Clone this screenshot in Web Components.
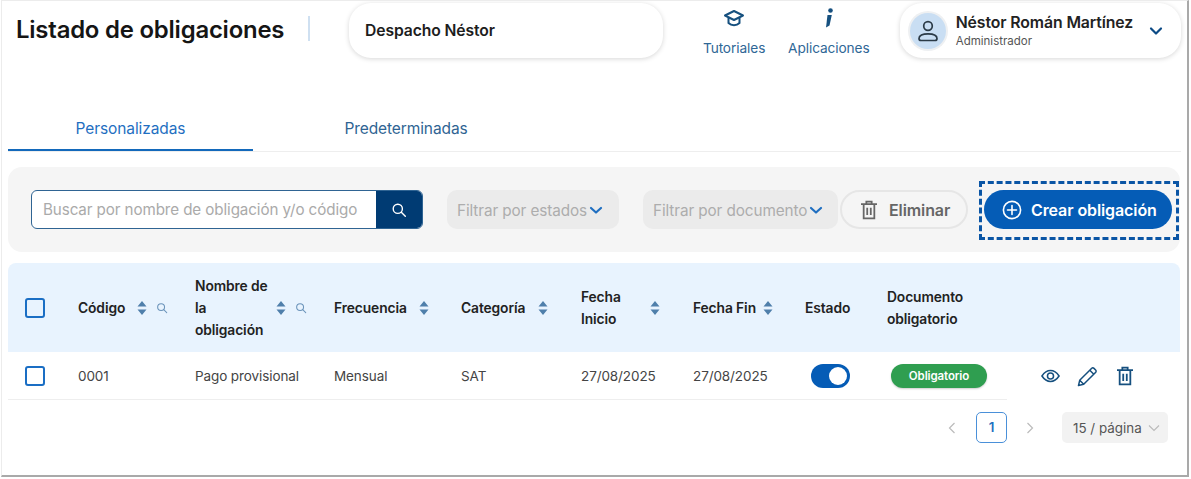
<!DOCTYPE html>
<html lang="es">
<head>
<meta charset="utf-8">
<title>Listado de obligaciones</title>
<style>
    html, body { margin: 0; background: #fff; }
    body { font-family: Inter, "Noto Sans", sans-serif; color: #222; }
</style>
</head>
<body>
<app-frame>
    <app-header></app-header>
    <tab-bar></tab-bar>
    <tool-bar></tool-bar>
    <obligations-table></obligations-table>
    <table-pager></table-pager>
</app-frame>
<script>
const ICONS = {
    search: `<svg viewBox="0 0 16 16" fill="none" stroke="currentColor" stroke-width="1.4" stroke-linecap="round"><circle cx="6.8" cy="6.8" r="4.6"/><path d="M10.3 10.3l4 4"/></svg>`,
    trash: `<svg width="16" height="20" viewBox="0 0 18 22" fill="none" stroke="currentColor" stroke-width="2"><path d="M0 4.500h18M6 4V1.500h6V4M3 4.500V20.500h12V4.500M7 8.500v8M11 8.500v8"/></svg>`
};

class AppFrame extends HTMLElement {
    constructor() {
        super();
        this.attachShadow({mode: "open"}).innerHTML = `
        <style>
            :host {
                display: block;
                box-sizing: border-box;
                width: 1188px;
                height: 477px;
                margin: 0 0 0 1px;
                padding: 0 6px;
                border-style: solid;
                border-color: #ececec #a9a9a9 #a9a9a9 #ececec;
                border-width: 1px 2px 2px 1px;
                overflow: hidden;
            }
        </style>
        <slot></slot>`;
    }
}

class AppHeader extends HTMLElement {
    constructor() {
        super();
        this.attachShadow({mode: "open"}).innerHTML = `
        <style>
            :host { display: flex; align-items: flex-start; height: 107px; }
            h1 { margin: 14px 0 0 8px; width: 268px; font-size: 23.9px; line-height: 30px; font-weight: 600; color: #151515; letter-spacing: -.2px; white-space: nowrap; }
            .sep { width: 2px; height: 25px; margin: 15px 39px 0 24px; background: #cfe0f1; }
            .pill { box-sizing: border-box; height: 55px; margin-top: 2px; background: #fff; border-radius: 22px; box-shadow: 0 1px 5px rgba(0,0,0,.16); }
            .company { width: 315px; display: flex; align-items: center; padding-left: 16px; font-size: 15.7px; font-weight: 600; color: #1d1d1d; letter-spacing: -.1px; }
            .link { display: flex; flex-direction: column; align-items: center; margin-top: 2px; font-size: 13.7px; color: #2f6796; letter-spacing: -.1px; }
            .link svg { display: block; height: 22px; margin: 4px 0 11px; }
            .tut { width: 80px; margin-left: 31px; }
            .app { width: 100px; margin-left: 5px; }
            .user { width: 282px; margin-left: 21px; display: flex; align-items: center; padding-left: 10px; }
            .avatar { width: 36px; height: 36px; border-radius: 50%; background: #c9def3; box-shadow: 0 0 0 2px #eef0f2; display: flex; align-items: center; justify-content: center; flex: none; }
            .who { margin-left: 10px; flex: 1; }
            .name { font-size: 15.8px; line-height: 21px; font-weight: 600; color: #222; white-space: nowrap; letter-spacing: -.1px; }
            .role { font-size: 11.500px; line-height: 16px; color: #555; }
            .chev { margin-right: 18px; flex: none; }
        </style>
        <h1>Listado de obligaciones</h1>
        <div class="sep"></div>
        <div class="pill company">Despacho Néstor</div>
        <div class="link tut">
            <svg viewBox="0 0 22 20" width="22" fill="none" stroke="#16507f" stroke-width="2" stroke-linejoin="round"><path d="M11 3L2 7.500l9 4.500 9-4.500z"/><path d="M5.500 10v5c1.500 1.500 3.500 2.200 5.500 2.200s4-.7 5.500-2.200v-5"/></svg>
            Tutoriales
        </div>
        <div class="link app">
            <svg viewBox="0 0 12 22" width="12" fill="#16507f"><circle cx="7.500" cy="3.500" r="2.300"/><path d="M4.500 8h4.300L6.500 18.500 3 20.500z"/></svg>
            Aplicaciones
        </div>
        <div class="pill user">
            <div class="avatar">
                <svg width="28" height="28" viewBox="0 0 28 28" fill="none" stroke="#2b3a46" stroke-width="1.700"><circle cx="14" cy="9" r="4.300"/><path d="M7 23.500h14c1.500 0 2-1 2-2 0-3-3.500-4.700-9-4.700s-9 1.700-9 4.700c0 1 .5 2 2 2z"/></svg>
            </div>
            <div class="who">
                <div class="name">Néstor Román Martínez</div>
                <div class="role">Administrador</div>
            </div>
            <svg class="chev" width="14" height="10" viewBox="0 0 14 10" fill="none" stroke="#0c4a85" stroke-width="2.200" stroke-linecap="round" stroke-linejoin="round"><path d="M2 2.500l5 5 5-5"/></svg>
        </div>`;
    }
}

class TabBar extends HTMLElement {
    constructor() {
        super();
        this.attachShadow({mode: "open"}).innerHTML = `
        <style>
            :host { display: flex; height: 43px; border-bottom: 1px solid #eee; margin-bottom: 15px; font-size: 15.500px; letter-spacing: -.1px; }
            div { box-sizing: border-box; height: 43px; padding-top: 11px; text-align: center; }
            .on { width: 245px; color: #1f6fc1; border-bottom: 2px solid #1369bb; }
            .off { width: 306px; color: #2f6493; }
        </style>
        <div class="on">Personalizadas</div>
        <div class="off">Predeterminadas</div>`;
    }
}

class ToolBar extends HTMLElement {
    constructor() {
        super();
        this.attachShadow({mode: "open"}).innerHTML = `
        <style>
            :host { display: flex; align-items: center; box-sizing: border-box; width: 1172px; height: 85px; padding-left: 23px; background: #f5f5f5; border-radius: 14px; margin-bottom: 11px; font-size: 15.300px; letter-spacing: -.1px; }
            .search { display: flex; width: 392px; height: 39px; box-sizing: border-box; border: 1.500px solid #2f6493; border-radius: 6px; background: #fff; overflow: hidden; }
            .search span { flex: 1; padding-left: 11px; font-size: 15.200px; line-height: 38px; color: #aaa; white-space: nowrap; }
            .search b { width: 46px; background: #003b73; color: #fff; display: flex; align-items: center; justify-content: center; }
            .search svg { width: 16px; height: 16px; }
            .filter { display: flex; align-items: center; box-sizing: border-box; height: 39px; padding: 1px 0 0 10px; background: #ebebeb; border-radius: 10px; color: #adadad; white-space: nowrap; }
            .filter svg { margin-left: 2px; }
            .estados { width: 172px; margin-left: 24px; }
            .documento { width: 195px; margin-left: 24px; }
            .delete { display: flex; align-items: center; box-sizing: border-box; width: 128px; height: 39px; margin-left: 2px; padding-left: 19px; border: 2px solid #e6e6e6; border-radius: 20px; color: #666; font-size: 16px; font-weight: 600; }
            .delete svg { margin-right: 12px; }
            .dashed { box-sizing: border-box; align-self: flex-start; width: 200px; height: 59px; margin: 14px 0 0 11px; padding: 6px 4px 0 2px; border: 3px dashed #0a55a5; display: flex; }
            .create { display: flex; align-items: center; flex: 1; height: 39px; padding-left: 18px; background: #055cb6; border-radius: 20px; color: #fff; font-size: 16px; font-weight: 600; white-space: nowrap; }
            .create svg { margin-right: 9px; }
        </style>
        <div class="search"><span>Buscar por nombre de obligación y/o código</span><b>${ICONS.search}</b></div>
        <div class="filter estados">Filtrar por estados<svg width="14" height="9" viewBox="0 0 14 9" fill="none" stroke="#1f6fc1" stroke-width="2.200" stroke-linecap="round" stroke-linejoin="round"><path d="M2 2l5 4.500L12 2"/></svg></div>
        <div class="filter documento">Filtrar por documento<svg width="14" height="9" viewBox="0 0 14 9" fill="none" stroke="#1f6fc1" stroke-width="2.200" stroke-linecap="round" stroke-linejoin="round"><path d="M2 2l5 4.500L12 2"/></svg></div>
        <div class="delete">${ICONS.trash}Eliminar</div>
        <div class="dashed"><div class="create">
            <svg width="20" height="20" viewBox="0 0 20 20" fill="none" stroke="#fff" stroke-width="1.600" stroke-linecap="round"><circle cx="10" cy="10" r="8.600"/><path d="M10 5.500v9M5.500 10h9"/></svg>
            Crear obligación
        </div></div>`;
    }
}

class SortCell extends HTMLElement {
    constructor() {
        super();
        this.attachShadow({mode: "open"}).innerHTML = `
        <style>
            :host { display: flex; align-items: center; }
            .label { width: var(--w); }
            .sort { flex: none; display: block; }
            .find { flex: none; width: 12px; height: 12px; margin-left: 8px; color: #6a93ba; }
            .find svg { display: block; }
        </style>
        <span class="label"><slot></slot></span>
        <svg class="sort" width="12" height="16" viewBox="0 0 12 16" fill="#4f7fab"><path d="M6 1l4.500 5.500h-9zM6 15l4.500-5.500h-9z"/></svg>`;
    }
    connectedCallback() {
        this.style.setProperty("--w", this.getAttribute("w") + "px");
        if (this.hasAttribute("find")) {
            const icon = document.createElement("span");
            icon.className = "find";
            icon.innerHTML = ICONS.search;
            this.shadowRoot.appendChild(icon);
        }
    }
}

class CheckBox extends HTMLElement {
    constructor() {
        super();
        this.attachShadow({mode: "open"}).innerHTML = `
        <style>
            :host { display: block; box-sizing: border-box; width: 20px; height: 20px; margin-left: 17px; border: 2px solid #1a6ec4; border-radius: 3px; }
        </style>`;
    }
}

class ObligationsTable extends HTMLElement {
    constructor() {
        super();
        this.attachShadow({mode: "open"}).innerHTML = `
        <style>
            :host { display: block; width: 1172px; font-size: 13.800px; letter-spacing: -.1px; }
            .row { display: grid; grid-template-columns: 70px 117px 139px 127px 120px 112px 112px 82px 120px 173px; align-items: center; }
            .head { height: 89px; background: #e8f3fe; border-radius: 8px 8px 0 0; font-weight: 600; color: #222; line-height: 22px; }
            .body { height: 47px; color: #444; font-size: 13.500px; }
            .body > * { height: 47px; display: flex; align-items: center; border-bottom: 1px solid #eee; }
            .body > .acts { border-bottom: 0; }
            .toggle { position: relative; width: 39px; height: 24px; margin-left: 6px; border-radius: 12px; background: #055cb6; }
            .toggle::after { content: ""; position: absolute; left: 18px; top: 3px; width: 18px; height: 18px; border-radius: 50%; background: #fff; }
            .badge { box-sizing: border-box; width: 96px; height: 24px; margin-left: 4px; border-radius: 12px; background: #2f9e50; color: #fff; font-size: 11.500px; font-weight: 600; display: flex; align-items: center; justify-content: center; box-shadow: 0 1px 2px rgba(0,0,0,.2); }
            .acts { display: flex; padding-left: 34px; color: #16507f; }
            .acts svg { display: block; flex: none; }
            .eye { margin-right: 17px; }
            .pen { margin-right: 19px; }
        </style>
        <div class="row head">
            <check-box></check-box>
            <sort-cell w="58" find>Código</sort-cell>
            <sort-cell w="80" find>Nombre de la obligación</sort-cell>
            <sort-cell w="84">Frecuencia</sort-cell>
            <sort-cell w="76">Categoría</sort-cell>
            <sort-cell w="68">Fecha Inicio</sort-cell>
            <sort-cell w="69">Fecha Fin</sort-cell>
            <div>Estado</div>
            <div style="width:90px">Documento obligatorio</div>
            <div></div>
        </div>
        <div class="row body">
            <div><check-box></check-box></div>
            <div>0001</div>
            <div>Pago provisional</div>
            <div>Mensual</div>
            <div>SAT</div>
            <div>27/08/2025</div>
            <div>27/08/2025</div>
            <div><span class="toggle"></span></div>
            <div><span class="badge">Obligatorio</span></div>
            <div class="acts">
                <svg class="eye" width="19" height="14" viewBox="0 0 20 14" fill="none" stroke="currentColor" stroke-width="1.600"><path d="M1 7c2.500-3.800 5.500-5.700 9-5.700S16.500 3.200 19 7c-2.500 3.800-5.500 5.700-9 5.700S3.500 10.800 1 7z"/><circle cx="10" cy="7" r="3.200"/></svg>
                <svg class="pen" width="21" height="21" viewBox="0 0 21 21" fill="none" stroke="currentColor" stroke-width="1.500" stroke-linejoin="round"><path d="M1.500 19.500l1.200-5.200L14.500 2.500c.8-.8 1.800-.8 2.500-.1l1.600 1.600c.7.700.7 1.700-.1 2.500L6.700 18.300zM2.700 14.300l4 4M12.800 4.200l4 4"/></svg>
                ${ICONS.trash}
            </div>
        </div>`;
    }
}

class TablePager extends HTMLElement {
    constructor() {
        super();
        this.attachShadow({mode: "open"}).innerHTML = `
        <style>
            :host { display: flex; align-items: center; justify-content: flex-end; width: 1160px; height: 31px; margin-top: 13px; font-size: 13.400px; }
            svg { display: block; flex: none; }
            .page { box-sizing: border-box; width: 31px; height: 31px; margin: 0 19px 0 20px; border: 1.500px solid #4a90d9; border-radius: 5px; color: #1f6fc1; font-weight: 600; text-align: center; line-height: 28px; }
            .size { display: flex; align-items: center; box-sizing: border-box; width: 106px; height: 31px; margin-left: 28px; padding-left: 11px; background: #f2f2f2; border-radius: 5px; color: #555; white-space: nowrap; }
            .size svg { margin-left: 6px; }
        </style>
        <svg width="8" height="12" viewBox="0 0 8 12" fill="none" stroke="#bbb" stroke-width="1.200"><path d="M6.500 1L1.500 6l5 5"/></svg>
        <div class="page">1</div>
        <svg width="8" height="12" viewBox="0 0 8 12" fill="none" stroke="#bbb" stroke-width="1.200"><path d="M1.500 1l5 5-5 5"/></svg>
        <div class="size">15 / página<svg width="12" height="8" viewBox="0 0 12 8" fill="none" stroke="#bbb" stroke-width="1.200"><path d="M1 1.500l5 5 5-5"/></svg></div>`;
    }
}

customElements.define("app-frame", AppFrame);
customElements.define("app-header", AppHeader);
customElements.define("tab-bar", TabBar);
customElements.define("tool-bar", ToolBar);
customElements.define("sort-cell", SortCell);
customElements.define("check-box", CheckBox);
customElements.define("obligations-table", ObligationsTable);
customElements.define("table-pager", TablePager);
</script>
</body>
</html>
